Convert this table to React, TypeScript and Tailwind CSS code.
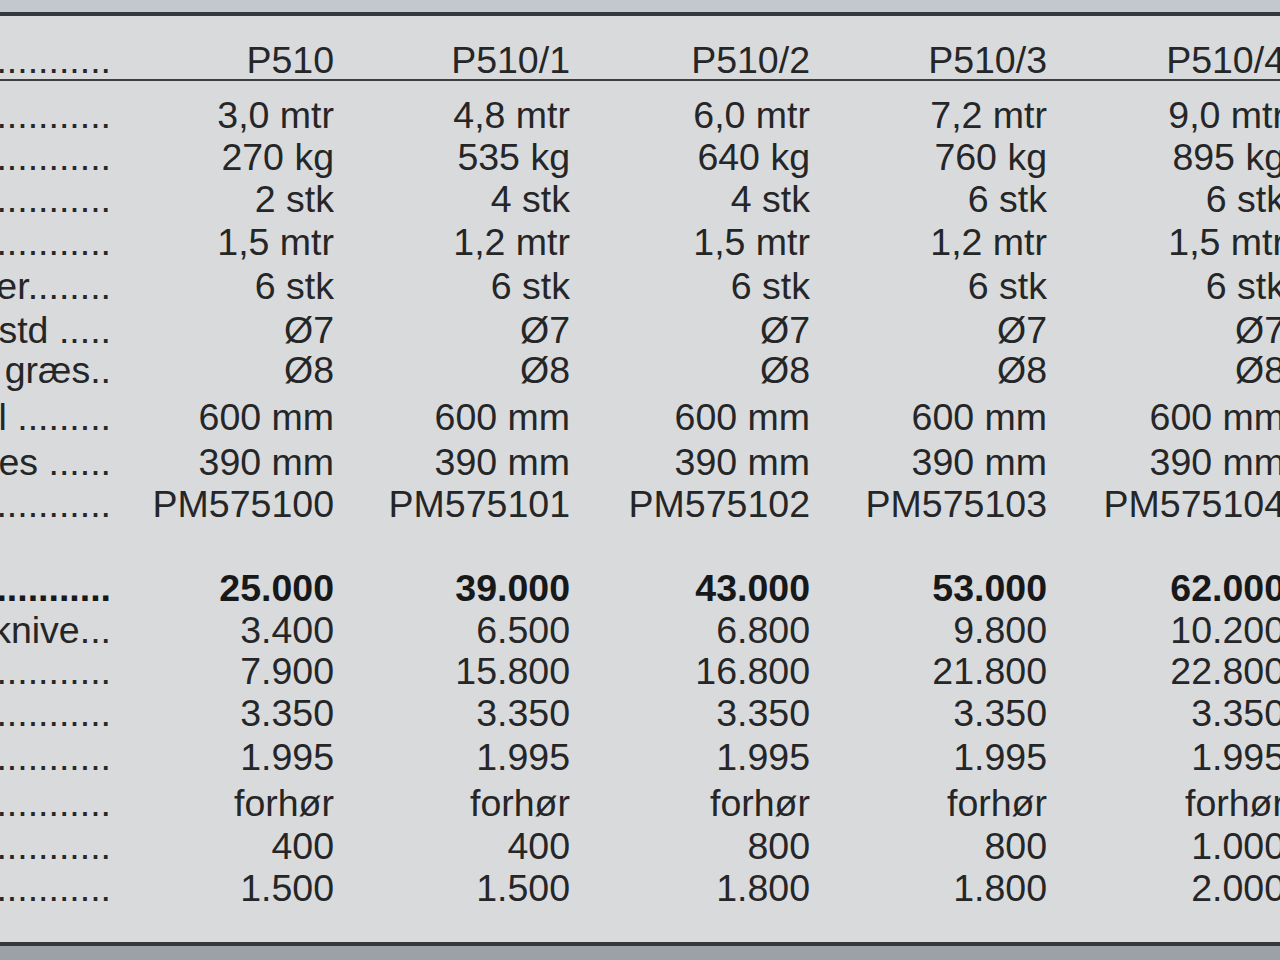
import React from "react";

type Row = { label: string; values: string[]; h: string; bold?: boolean };

const headers = ["P510", "P510/1", "P510/2", "P510/3", "P510/4"];

const rows: Row[] = [
  { label: "Arbejdsbredde ...............", values: ["3,0 mtr", "4,8 mtr", "6,0 mtr", "7,2 mtr", "9,0 mtr"], h: "h-[42px]" },
  { label: "Vægt ...............", values: ["270 kg", "535 kg", "640 kg", "760 kg", "895 kg"], h: "h-[42px]" },
  { label: "Antal rotorer ...............", values: ["2 stk", "4 stk", "4 stk", "6 stk", "6 stk"], h: "h-[43px]" },
  { label: "Rotordiameter ...............", values: ["1,5 mtr", "1,2 mtr", "1,5 mtr", "1,2 mtr", "1,5 mtr"], h: "h-[44px]" },
  { label: "Knivholder........", values: ["6 stk", "6 stk", "6 stk", "6 stk", "6 stk"], h: "h-[44px]" },
  { label: "Knivtykkelse std .....", values: ["Ø7", "Ø7", "Ø7", "Ø7", "Ø7"], h: "h-[40px]" },
  { label: "Knivtykkelse til græs..", values: ["Ø8", "Ø8", "Ø8", "Ø8", "Ø8"], h: "h-[47px]" },
  { label: "Højde total .........", values: ["600 mm", "600 mm", "600 mm", "600 mm", "600 mm"], h: "h-[45px]" },
  { label: "Afstand mellem knives ......", values: ["390 mm", "390 mm", "390 mm", "390 mm", "390 mm"], h: "h-[42px]" },
  { label: "Varenummer ...............", values: ["PM575100", "PM575101", "PM575102", "PM575103", "PM575104"], h: "h-[84px]" },
  { label: "Pris ...............", values: ["25.000", "39.000", "43.000", "53.000", "62.000"], h: "h-[42px]", bold: true },
  { label: "Ekstra sæt knive...", values: ["3.400", "6.500", "6.800", "9.800", "10.200"], h: "h-[41px]" },
  { label: "Hydraulisk sideforskydning ...............", values: ["7.900", "15.800", "16.800", "21.800", "22.800"], h: "h-[42px]" },
  { label: "Kardanaksel ...............", values: ["3.350", "3.350", "3.350", "3.350", "3.350"], h: "h-[44px]" },
  { label: "Hjulsæt ...............", values: ["1.995", "1.995", "1.995", "1.995", "1.995"], h: "h-[46px]" },
  { label: "Transportvogn ...............", values: ["forhør", "forhør", "forhør", "forhør", "forhør"], h: "h-[43px]" },
  { label: "Fragt ...............", values: ["400", "400", "800", "800", "1.000"], h: "h-[42px]" },
  { label: "Montering ...............", values: ["1.500", "1.500", "1.800", "1.800", "2.000"], h: "h-[43px]" },
];

const grid = "grid grid-cols-[111px_223px_236px_240px_237px_238px]";

function Label({ text }: { text: string }) {
  return (
    <div className="flex justify-end overflow-hidden whitespace-nowrap">
      <span className="shrink-0">{text}</span>
    </div>
  );
}

export default function App() {
  return (
    <div
      className="w-[1280px] h-[960px] overflow-hidden bg-[#9aa1a9] flex flex-col text-[#252628]"
      style={{ fontFamily: '"Liberation Sans", Arial, Helvetica, sans-serif' }}
    >
      <div className="h-[12px] bg-[#c3c7ce] shrink-0" />
      <div className="h-[934px] shrink-0 bg-[#d9dadc] border-t-[4px] border-b-[4px] border-[#33383d] overflow-hidden text-[37.5px]">
        <div className={`${grid} mt-[22px] h-[43px] leading-[44px] border-b-2 border-[#3b3f44]`}>
          <Label text="Model ...................." />
          {headers.map((h) => (
            <div key={h} className="text-right whitespace-nowrap">
              {h}
            </div>
          ))}
        </div>
        <div className="pt-[13px]">
          {rows.map((r, i) => (
            <div
              key={i}
              className={`${grid} ${r.h} leading-[43px] ${r.bold ? "font-bold text-[#17181a]" : ""}`}
            >
              <Label text={r.label} />
              {r.values.map((v, j) => (
                <div key={j} className="text-right whitespace-nowrap">
                  {v}
                </div>
              ))}
            </div>
          ))}
        </div>
      </div>
      <div className="flex-1 bg-[#9aa1a9]" />
    </div>
  );
}
